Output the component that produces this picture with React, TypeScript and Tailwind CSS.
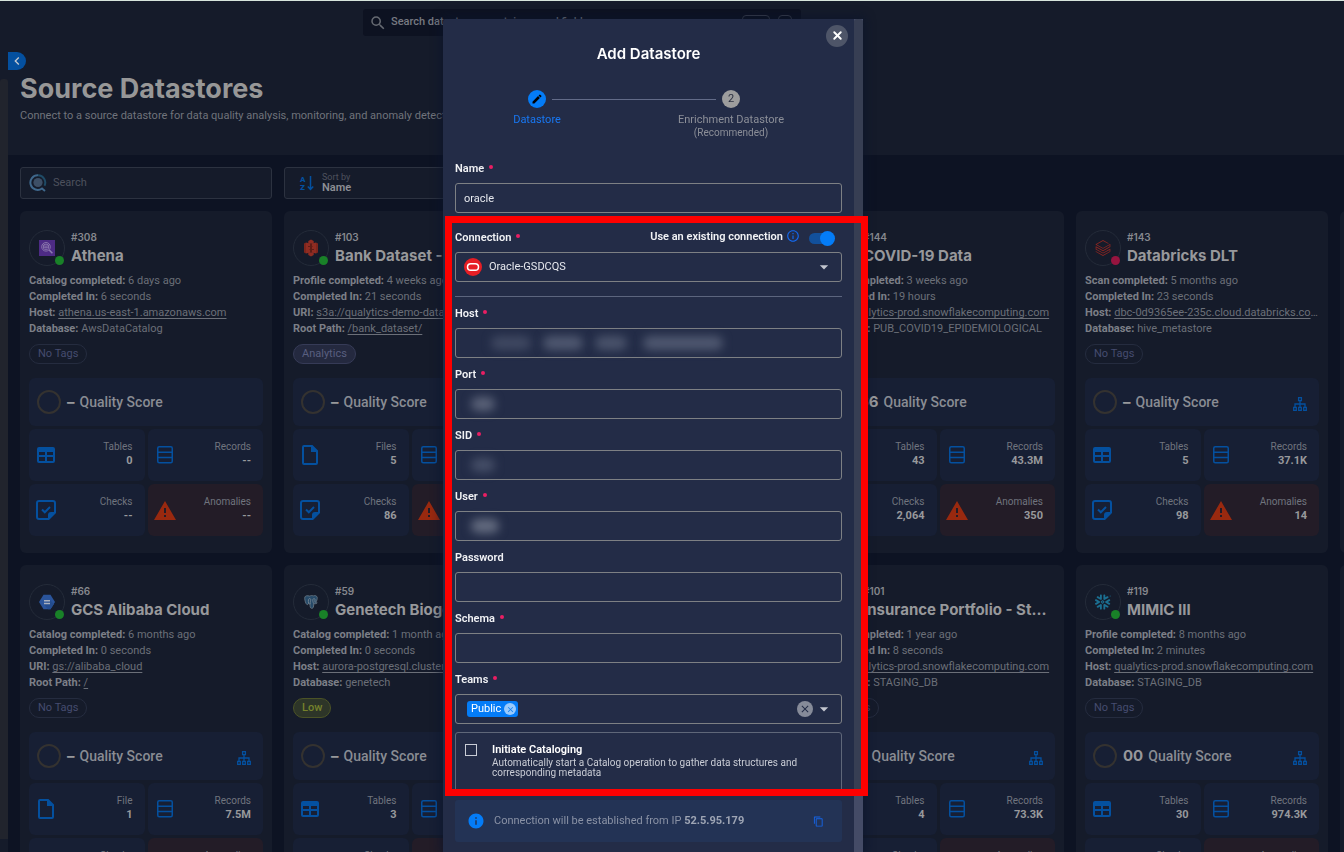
import React from 'react'
import { X } from 'lucide-react'
import { MdSearch, MdEdit, MdClose, MdInfo, MdInfoOutline, MdContentCopy, MdChevronLeft, MdArrowDropDown } from 'react-icons/md'
import { SiDatabricks, SiSnowflake } from 'react-icons/si'

type Store = {
  id: string
  name: string
  brand: 'athena' | 's3' | 'gcs' | 'postgres' | 'snowflake' | 'databricks'
  failed?: boolean
  action: string
  ago: string
  duration: string
  linkLabel: string
  link: string
  lastLabel: string
  last: string
  lastIsLink?: boolean
  tag?: 'No Tags' | 'Analytics' | 'Low'
  score: string
  sitemap?: boolean
  unit: 'Tables' | 'Files' | 'File'
  units: string
  records: string
  checks: string
  anomalies: string
}

const stores: (Store | null)[] = [
  { id: '308', name: 'Athena', brand: 'athena', action: 'Catalog', ago: '6 days ago', duration: '6 seconds', linkLabel: 'Host', link: 'athena.us-east-1.amazonaws.com', lastLabel: 'Database', last: 'AwsDataCatalog', tag: 'No Tags', score: '–', unit: 'Tables', units: '0', records: '--', checks: '--', anomalies: '--' },
  { id: '103', name: 'Bank Dataset - Staging', brand: 's3', action: 'Profile', ago: '4 weeks ago', duration: '21 seconds', linkLabel: 'URI', link: 's3a://qualytics-demo-data', lastLabel: 'Root Path', last: '/bank_dataset/', lastIsLink: true, tag: 'Analytics', score: '–', unit: 'Files', units: '5', records: '--', checks: '86', anomalies: '--' },
  null,
  { id: '144', name: 'COVID-19 Data', brand: 'snowflake', action: 'Scan', ago: '3 weeks ago', duration: '19 hours', linkLabel: 'Host', link: 'qualytics-prod.snowflakecomputing.com', lastLabel: 'Database', last: 'PUB_COVID19_EPIDEMIOLOGICAL', score: '66', unit: 'Tables', units: '43', records: '43.3M', checks: '2,064', anomalies: '350' },
  { id: '143', name: 'Databricks DLT', brand: 'databricks', failed: true, action: 'Scan', ago: '5 months ago', duration: '23 seconds', linkLabel: 'Host', link: 'dbc-0d9365ee-235c.cloud.databricks.com', lastLabel: 'Database', last: 'hive_metastore', tag: 'No Tags', score: '–', sitemap: true, unit: 'Tables', units: '5', records: '37.1K', checks: '98', anomalies: '14' },
  null,
  { id: '66', name: 'GCS Alibaba Cloud', brand: 'gcs', action: 'Catalog', ago: '6 months ago', duration: '0 seconds', linkLabel: 'URI', link: 'gs://alibaba_cloud', lastLabel: 'Root Path', last: '/', lastIsLink: true, tag: 'No Tags', score: '–', sitemap: true, unit: 'File', units: '1', records: '7.5M', checks: '--', anomalies: '--' },
  { id: '59', name: 'Genetech Biogeniuses', brand: 'postgres', action: 'Catalog', ago: '1 month ago', duration: '0 seconds', linkLabel: 'Host', link: 'aurora-postgresql.cluster', lastLabel: 'Database', last: 'genetech', tag: 'Low', score: '–', unit: 'Tables', units: '3', records: '--', checks: '--', anomalies: '--' },
  null,
  { id: '101', name: 'Insurance Portfolio - Staging', brand: 'snowflake', action: 'Scan', ago: '1 year ago', duration: '8 seconds', linkLabel: 'Host', link: 'qualytics-prod.snowflakecomputing.com', lastLabel: 'Database', last: 'STAGING_DB', tag: 'No Tags', score: '–', sitemap: true, unit: 'Tables', units: '4', records: '73.3K', checks: '--', anomalies: '--' },
  { id: '119', name: 'MIMIC III', brand: 'snowflake', action: 'Profile', ago: '8 months ago', duration: '2 minutes', linkLabel: 'Host', link: 'qualytics-prod.snowflakecomputing.com', lastLabel: 'Database', last: 'STAGING_DB', tag: 'No Tags', score: '00', sitemap: true, unit: 'Tables', units: '30', records: '974.3K', checks: '--', anomalies: '--' },
  null,
]

function TableIcon() {
  return (
    <svg viewBox="0 0 18 16" className="h-4 w-[18px] shrink-0">
      <path fill="currentColor" fillRule="evenodd" d="M2 0h14a2 2 0 0 1 2 2v12a2 2 0 0 1-2 2H2a2 2 0 0 1-2-2V2a2 2 0 0 1 2-2Zm0 5v3h6V5H2Zm8 0v3h6V5h-6ZM2 10v4h6v-4H2Zm8 0v4h6v-4h-6Z" />
    </svg>
  )
}

function RowsIcon() {
  return (
    <svg viewBox="0 0 16 18" className="h-[18px] w-4 shrink-0" fill="none" stroke="currentColor" strokeWidth="1.5">
      <rect x="0.75" y="0.75" width="14.5" height="16" rx="1.5" />
      <path d="M1 6.2h14M1 11.5h14" />
    </svg>
  )
}

function FileIcon() {
  return (
    <svg viewBox="0 0 16 20" className="h-5 w-4 shrink-0">
      <path fill="currentColor" fillRule="evenodd" d="M2 0h8.5L16 5.5V18a2 2 0 0 1-2 2H2a2 2 0 0 1-2-2V2a2 2 0 0 1 2-2Zm0 2v16h12V7H9V2H2Z" />
    </svg>
  )
}

function CheckNoteIcon() {
  return (
    <svg viewBox="0 0 20 20" className="h-5 w-5 shrink-0">
      <path fill="currentColor" fillRule="evenodd" d="M3 0h14a3 3 0 0 1 3 3v10l-7 7H3a3 3 0 0 1-3-3V3a3 3 0 0 1 3-3Zm0 2a1 1 0 0 0-1 1v14a1 1 0 0 0 1 1h9v-3a3 3 0 0 1 3-3h3V3a1 1 0 0 0-1-1H3Z" />
      <path fill="none" stroke="currentColor" strokeWidth="2" d="m6 9.5 2.800 2.800L14 7" />
    </svg>
  )
}

function AlertIcon() {
  return (
    <svg viewBox="0 0 22 19" className="h-[19px] w-[22px] shrink-0">
      <path fill="currentColor" fillRule="evenodd" d="M11 0 22 19H0L11 0Zm-1 7v5h2V7h-2Zm0 7v2h2v-2h-2Z" />
    </svg>
  )
}

function SitemapIcon() {
  return (
    <svg viewBox="0 0 14 14" className="h-[14px] w-[14px] text-[#04509f]" fill="none" stroke="currentColor" strokeWidth="1.300">
      <path d="M5.600.7h2.800v3H5.600zM.7 10.300h2.600v3H.7zM5.700 10.300h2.600v3H5.700zM10.700 10.300h2.600v3h-2.600zM7 4v6M2 10V7h10v3" />
    </svg>
  )
}

function BrandIcon({ brand }: { brand: Store['brand'] }) {
  if (brand === 'databricks') return <SiDatabricks className="h-4 w-4 text-[#8d2622]" />
  if (brand === 'snowflake') return <SiSnowflake className="h-4 w-4 text-[#1b6f91]" />
  if (brand === 'postgres')
    return (
      <svg viewBox="0 0 14 14" className="h-[14px] w-[14px]">
        <path fill="#264a69" stroke="#6c7a86" strokeWidth="0.8" strokeLinejoin="round" d="M4 .8C2 .4.600 1.300.7 3.300c.1 2 1 5.600 2.200 6.200.7.3 1.200-.2 1.700-.8.4.4.9.5 1.500.4-.1 1.800-.1 3.900 1.300 4.200 1.500.2 2.100-.8 2.200-2.300l.2-2.300c1.300.2 2.800-.1 3.400-.9-.6 0-1.200 0-1.400-.3 1-1.600 1.700-4 1.400-5.200C12.700.6 10.900.3 9.300.9 7.800.4 6.800.5 5.800 1.100 5.200.9 4.600.8 4 .8Z" />
        <path fill="none" stroke="#7d8a95" strokeWidth="0.8" d="M4.700 8.700C4.300 7 4.200 5.700 4.500 4.300c.4-1 2-.9 2.200 0 .2 1.400-.6 2.500-.5 4.700M9.700 8.600C8.800 7 8.600 5.500 9 4.200c.4-.9 1.900-.7 2 .1.100 1.100-.3 2 .1 3.200" />
      </svg>
    )
  if (brand === 'athena')
    return (
      <svg viewBox="0 0 16 16" className="h-4 w-4">
        <rect width="16" height="16" fill="#4d2b85" />
        <g fill="none" stroke="#8f7cb0" strokeWidth="0.9">
          <circle cx="7" cy="6.800" r="4.300" />
          <ellipse cx="7" cy="5.200" rx="2.600" ry="1" />
          <path d="M4.400 5.200v3.200c0 1.300 5.200 1.300 5.200 0V5.200M4.500 7c.8 1 4.200 1 5 0" />
          <path strokeWidth="1.500" d="m10.200 10 3.200 3.300" />
        </g>
      </svg>
    )
  if (brand === 's3')
    return (
      <svg viewBox="0 0 16 18" className="h-[18px] w-4">
        <path fill="#7d251c" d="M1 4.500 3 3.500v11l-2-1zM15 4.500l-2-1v11l2-1z" />
        <path fill="#8f2c22" d="m3 3.500 4 1v9l-4 1zM13 3.500l-4 1v9l4 1z" />
        <path fill="#5f1d16" d="M7 4.500h2v9H7z" />
        <path fill="#8f2c22" d="m8 .5 2.700 1.400V5L8 4.400 5.300 5V1.900zM8 17.500l2.700-1.400V13l-2.700.6-2.700-.6v3.100z" />
        <path fill="none" stroke="#5f1d16" strokeWidth="1" d="M5 7.500h4.500M6.500 10.500H11" />
      </svg>
    )
  return (
    <svg viewBox="0 0 16 16" className="h-4 w-4">
      <path fill="#2a549b" d="M4.500.8h7L16 8l-4.500 7.200h-7L0 8z" />
      <path fill="#244c8e" d="m11 6 4 4-3.500 5.200H9L5 10.500z" />
      <path stroke="#a9b1bf" strokeWidth="1.500" d="M5 6.700h6M5 9.500h6" />
    </svg>
  )
}

function Tile({ icon, label, value, alert }: { icon: React.ReactNode; label: string; value: string; alert?: boolean }) {
  return (
    <div className={`flex h-[52px] items-center justify-between rounded-md pl-2 pr-3 ${alert ? 'bg-[#231c27]' : 'bg-[#171f34]'}`}>
      <span className={`flex w-[18px] justify-center ${alert ? 'text-[#99290f]' : 'text-[#04509f]'}`}>{icon}</span>
      <span className="flex flex-col items-end pb-1">
        <span className="text-[10px] leading-[14px] text-[#70747e]">{label}</span>
        <span className="text-[11px] font-bold leading-[13px] text-[#98999c]">{value}</span>
      </span>
    </div>
  )
}

function StoreCard({ s }: { s: Store | null }) {
  if (!s) return <article className="h-[342px] rounded-md bg-[#151b2a]" />
  const tagStyle =
    s.tag === 'Analytics'
      ? 'border-[#363b57] bg-[#24293f] text-[#595f80]'
      : s.tag === 'Low'
        ? 'border-[#4b5326] bg-[#2d3528] text-[#76822c] font-medium'
        : 'border-[#252c3f] text-[#454c6f]'
  return (
    <article className="flex h-[342px] flex-col rounded-md bg-[#151b2a] px-[9px]">
      <header className="flex h-[62px] items-start gap-[6px] pt-[19px]">
        <span className="relative flex h-9 w-9 shrink-0 items-center justify-center rounded-full border border-[#242b39]">
          <BrandIcon brand={s.brand} />
          <span className={`absolute bottom-0 right-0 h-[9px] w-[9px] rounded-full ${s.failed ? 'bg-[#96143f]' : 'bg-[#198128]'}`} />
        </span>
        <span className="min-w-0 font-['Inter',sans-serif]">
          <span className="block text-[10px] font-semibold leading-[14px] text-[#86888e]">#{s.id}</span>
          <h2 className="truncate text-[15px] font-bold leading-6 text-[#97989b]">{s.name}</h2>
        </span>
      </header>
      <div className="text-[11px] leading-4 text-[#6b6f78] [&_b]:text-[#7c7f87]">
        <p className="truncate"><b>{s.action} completed:</b> {s.ago}</p>
        <p className="truncate"><b>Completed In:</b> {s.duration}</p>
        <p className="truncate"><b>{s.linkLabel}:</b> <a href="#" className="underline underline-offset-2">{s.link}</a></p>
        <p className="truncate"><b>{s.lastLabel}:</b> {s.lastIsLink ? <a href="#" className="underline underline-offset-2">{s.last}</a> : s.last}</p>
      </div>
      <div className="flex h-[41px] items-start pt-[7px]">
        {s.tag && <span className={`rounded-full border px-2 text-[11px] leading-[18px] ${tagStyle}`}>{s.tag}</span>}
      </div>
      <div className="flex h-12 items-center rounded-md bg-[#171f34] px-2">
        <span className="h-6 w-6 rounded-full border-2 border-[#343230]" />
        <span className="ml-[6px] font-['Inter',sans-serif] text-[15px] font-bold text-[#97989b]">{s.score}</span>
        <span className="ml-[5px] text-sm font-medium text-[#898c93]">Quality Score</span>
        {s.sitemap && <span className="ml-auto mr-1 mt-1"><SitemapIcon /></span>}
      </div>
      <div className="mt-[3px] grid grid-cols-2 gap-[3px]">
        <Tile icon={s.unit === 'Tables' ? <TableIcon /> : <FileIcon />} label={s.unit} value={s.units} />
        <Tile icon={<RowsIcon />} label="Records" value={s.records} />
        <Tile icon={<CheckNoteIcon />} label="Checks" value={s.checks} />
        <Tile alert icon={<AlertIcon />} label="Anomalies" value={s.anomalies} />
      </div>
    </article>
  )
}

function FieldLabel({ id, children, required }: { id: string; children: React.ReactNode; required?: boolean }) {
  return (
    <label htmlFor={id} className="flex h-[18px] items-center text-[11px] font-semibold text-[#f1f2f5]">
      {children}
      {required && <span className="mb-1 ml-[5px] h-1 w-1 rounded-full bg-[#ea1e63]" />}
    </label>
  )
}

const box = 'h-[30px] w-full rounded-[3px] border border-[#7d8084] bg-transparent px-2 text-[11px] text-[#e6e8ee] outline-none'

function Field({ id, label, required, value = '', children }: { id: string; label: string; required?: boolean; value?: string; children?: React.ReactNode }) {
  return (
    <div className="flex flex-col gap-[5px]">
      <FieldLabel id={id} required={required}>{label}</FieldLabel>
      <div className="relative flex">
        <input id={id} defaultValue={value} className={box} />
        {children}
      </div>
    </div>
  )
}

function Smudge({ className }: { className: string }) {
  return <span className={`pointer-events-none absolute top-2 h-3.5 rounded-full blur-[5px] ${className}`} />
}

function AddDatastore() {
  return (
    <div className="fixed inset-0 flex justify-center overflow-hidden pr-[38px] pt-[19px]">
      <section role="dialog" aria-labelledby="dialog-title" className="relative flex w-[420px] rounded-t-[3px] bg-[#232c47] shadow-[0_0_10px_3px_rgba(10,20,45,0.6)]">
        <div className="flex min-w-0 flex-1 flex-col px-3">
          <h2 id="dialog-title" className="pt-[23px] text-center font-['Inter',sans-serif] text-[15px] font-semibold leading-6 text-white">Add Datastore</h2>
          <button aria-label="Close" className="absolute right-[15px] top-[6px] flex h-[22px] w-[22px] items-center justify-center rounded-full bg-[#4e5568] pb-0.5 text-white">
            <X size={13} strokeWidth={3.5} />
          </button>

          <div className="ml-7 mt-6 h-[70px] w-[302px]">
            <div className="flex items-center gap-[6px] px-[45px]">
              <span className="flex h-[18px] w-[18px] items-center justify-center rounded-full bg-[#047cf7] text-black"><MdEdit size={12} /></span>
              <span className="h-px flex-1 bg-[#626b88]" />
              <span className="flex h-[18px] w-[18px] items-center justify-center rounded-full bg-[#9d9d9d] text-[11px] text-[#2b3040]">2</span>
            </div>
            <div className="mt-1 flex justify-between text-center text-[11px] leading-4">
              <span className="w-[108px] text-[#1877f2]">Datastore</span>
              <span className="flex w-[108px] flex-col items-center text-[#8c8f98]">
                <span className="whitespace-nowrap">Enrichment Datastore</span>
                <span className="text-[10px] leading-[9px]">(Recommended)</span>
              </span>
            </div>
          </div>

          <form className="flex flex-col gap-2">
            <Field id="name" label="Name" required value="oracle" />
            <div className="mt-2 flex flex-col gap-[5px]">
              <div className="flex items-center justify-between">
                <FieldLabel id="connection" required>Connection</FieldLabel>
                <label className="flex h-[18px] items-center pb-0.5 pr-2 text-[11px] font-semibold text-[#f1f2f5]">
                  Use an existing connection
                  <MdInfoOutline size={14} className="mb-0.5 ml-[3px] text-[#1469f0]" />
                  <input
                    type="checkbox"
                    role="switch"
                    defaultChecked
                    className="relative ml-[9px] mt-0.5 h-[11px] w-[25px] appearance-none rounded-full bg-[#12509b] after:absolute after:-right-px after:-top-0.5 after:h-[15px] after:w-[15px] after:rounded-full after:bg-[#047cf7]"
                  />
                </label>
              </div>
              <div className="relative flex">
                <select id="connection" className={`${box} appearance-none pl-[33px]`}>
                  <option>Oracle-GSDCQS</option>
                </select>
                <svg viewBox="0 0 18 18" className="pointer-events-none absolute left-[9px] top-[6px] h-[18px] w-[18px]">
                  <circle cx="9" cy="9" r="9" fill="#e71e25" />
                  <rect x="3.500" y="5.700" width="11" height="6.600" rx="3.300" fill="none" stroke="#fff" strokeWidth="1.500" />
                </svg>
                <MdArrowDropDown size={20} className="pointer-events-none absolute right-2 top-[5px] text-[#c3c6cf]" />
              </div>
            </div>
            <hr className="mt-[6px] border-[#5c657e]" />
            <Field id="host" label="Host" required>
              <Smudge className="left-9 w-10 bg-[#3f4861]" />
              <Smudge className="left-[88px] w-10 bg-[#4f5870]" />
              <Smudge className="left-[140px] w-8 bg-[#4a536b]" />
              <Smudge className="left-[188px] w-20 bg-[#4f5870]" />
            </Field>
            <Field id="port" label="Port" required>
              <Smudge className="left-4 w-6 bg-[#5a6278]" />
            </Field>
            <Field id="sid" label="SID" required>
              <Smudge className="left-4 w-6 bg-[#454e67]" />
            </Field>
            <Field id="user" label="User" required>
              <Smudge className="left-4 w-7 bg-[#646c80]" />
            </Field>
            <Field id="password" label="Password" />
            <Field id="schema" label="Schema" required />
            <div className="flex flex-col gap-[5px]">
              <FieldLabel id="teams" required>Teams</FieldLabel>
              <div className="flex h-[30px] items-center rounded-[3px] border border-[#7d8084] pl-[11px] pr-[7px]">
                <span className="flex h-4 items-center gap-[3px] rounded-[3px] bg-[#047cf7] pl-1 pr-0.5 text-[11px] text-white">
                  Public
                  <button type="button" aria-label="Remove Public" className="flex h-3 w-3 items-center justify-center rounded-full bg-[#99cafc] text-[#1280f0]"><MdClose size={9} /></button>
                </span>
                <input id="teams" className="min-w-0 flex-1 bg-transparent outline-none" />
                <button type="button" aria-label="Clear teams" className="flex h-4 w-4 items-center justify-center rounded-full bg-[#868b99] text-[#232c47]"><MdClose size={12} /></button>
                <MdArrowDropDown size={20} className="ml-px text-[#c3c6cf]" />
              </div>
            </div>
            <div className="flex h-[60px] gap-[15px] rounded-[3px] border border-[#5f6779] pl-[9px] pt-2">
              <input id="cataloging" type="checkbox" className="mt-[3px] h-3 w-3 shrink-0 appearance-none border border-[#c8ccd6]" />
              <label htmlFor="cataloging" className="flex flex-col">
                <span className="text-[11px] font-semibold leading-[17px] text-white">Initiate Cataloging</span>
                <span className="max-w-[322px] text-[10px] leading-[10px] text-[#c9ccd5]">Automatically start a Catalog operation to gather data structures and corresponding metadata</span>
              </label>
            </div>
            <div className="flex h-[42px] shrink-0 items-center rounded-[3px] bg-[#233355] pl-3 pr-[18px] text-[#8a92a5]">
              <MdInfo size={18} className="text-[#047cf7]" />
              <span className="ml-[9px] text-[11px]">Connection will be established from IP <b className="text-[#9ea5b4]">52.5.95.179</b></span>
              <button type="button" aria-label="Copy IP" className="ml-auto text-[#1565e8]"><MdContentCopy size={11} /></button>
            </div>
          </form>
        </div>
        <div className="w-[9px] bg-[#444b66]">
          <div className="h-[777px] rounded-[3px] bg-[#373e53]" />
        </div>
      </section>
      <div className="pointer-events-none absolute left-[445px] top-[216px] h-[580px] w-[423px] border-[7px] border-[#fe0000]" />
    </div>
  )
}

export default function App() {
  return (
    <div className="flex h-screen flex-col overflow-hidden border-t border-[#d7e5dc] bg-[#0d1323] font-['Roboto',sans-serif]">
      <header className="flex h-[42px] shrink-0 justify-center bg-[#151b2a] pr-[180px] pt-2 shadow-[0_1px_2px_rgba(0,0,0,0.3)]">
        <label className="flex h-[27px] w-[438px] items-center gap-1 rounded-[3px] bg-[#0d1221] pl-[6px] pr-[9px]">
          <MdSearch size={18} className="text-[#666a72]" />
          <input placeholder="Search datastores, containers and fields" className="min-w-0 flex-1 bg-transparent text-[11px] font-medium outline-none placeholder:text-[#777a82]" />
          <kbd className="h-[15px] w-7 rounded border border-[#3a3f4c]" />
          <kbd className="ml-1 h-[15px] w-[14px] rounded border border-[#3a3f4c]" />
        </label>
      </header>
      <div className="flex min-h-0 flex-1">
        <aside className="w-2 shrink-0 bg-[#151b2a] pt-9">
          <div className="h-[760px] rounded-t-[3px] bg-[#21242d]" />
        </aside>
        <main className="min-w-0 flex-1 overflow-hidden">
          <div className="h-28 bg-[#151b2a] pt-[9px]">
            <button aria-label="Collapse menu" className="flex h-[18px] w-[18px] items-center justify-center rounded-r-full bg-[#04509f] text-[#c4c8cf]">
              <MdChevronLeft size={16} />
            </button>
            <h1 className="mt-0.5 pl-3 font-['Inter',sans-serif] text-[27px] font-bold leading-[34px] text-[#979797]">Source Datastores</h1>
            <p className="mt-0.5 whitespace-nowrap pl-3 text-[11px] leading-4 text-[#70737b]">Connect to a source datastore for data quality analysis, monitoring, and anomaly detection.</p>
          </div>
          <div className="flex gap-3 pl-3 pt-3">
            <label className="flex h-8 w-[252px] items-center gap-[6px] rounded-[3px] border border-[#2c3240] bg-[#151b2a] pl-2">
              <svg viewBox="0 0 18 18" className="h-[18px] w-[18px]">
                <circle cx="9" cy="8.500" r="4.600" fill="#3d4f66" />
                <path fill="none" stroke="#1f4b66" strokeWidth="2" d="M9 1.300a7.300 7.300 0 0 1 6.500 10.500" />
                <path fill="none" stroke="#3f688c" strokeWidth="2" d="M9 1.300a7.300 7.300 0 1 0 4 13.200l3 2.500" />
              </svg>
              <input placeholder="Search" className="min-w-0 flex-1 bg-transparent text-[11px] outline-none placeholder:text-[#4d515d]" />
            </label>
            <div className="relative flex h-8 w-[252px] items-center rounded-[3px] border border-[#2c3240] bg-[#151b2a] pl-[14px]">
              <svg viewBox="0 0 16 18" className="h-[18px] w-4 text-[#04509f]">
                <text x="1" y="8" fontSize="8" fontWeight="900" fill="currentColor">A</text>
                <text x="1" y="16" fontSize="8" fontWeight="900" fill="currentColor">Z</text>
                <path d="M11.500 2v13M8.800 12.500l2.700 3 2.700-3" fill="none" stroke="currentColor" strokeWidth="1.500" />
              </svg>
              <span className="ml-[7px] flex flex-1 flex-col pb-px">
                <label htmlFor="sort" className="text-[9px] leading-[10px] text-[#4d515d]">Sort by</label>
                <select id="sort" className="appearance-none bg-transparent text-[11px] font-semibold leading-3 text-[#8c8e94]">
                  <option>Name</option>
                </select>
              </span>
            </div>
          </div>
          <div className="grid grid-cols-[repeat(6,252px)] gap-3 pl-3 pt-3">
            {stores.map((s, i) => (
              <StoreCard key={i} s={s} />
            ))}
          </div>
        </main>
      </div>
      <AddDatastore />
    </div>
  )
}
